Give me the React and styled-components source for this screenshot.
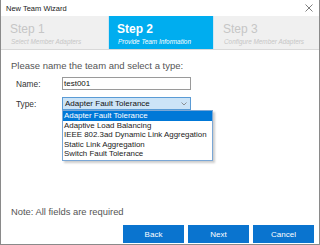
import styled, { createGlobalStyle } from 'styled-components'

const Global = createGlobalStyle`
    html, body {
        margin: 0;
        padding: 0;
        background: #ffffff;
    }
    body {
        font-family: "Liberation Sans", Arial, sans-serif;
    }
`

const steps = [
    { title: 'Step 1', sub: 'Select Member Adapters' },
    { title: 'Step 2', sub: 'Provide Team Information', active: true },
    { title: 'Step 3', sub: 'Configure Member Adapters' },
]

const options = [
    'Adapter Fault Tolerance',
    'Adaptive Load Balancing',
    'IEEE 802.3ad Dynamic Link Aggregation',
    'Static Link Aggregation',
    'Switch Fault Tolerance',
]

const App = () => {
    return (
        <Window>
            <Global />
            <TitleBar>
                <TitleText>New Team Wizard</TitleText>
                <Close>
                    <svg width="8" height="8" viewBox="0 0 8 8">
                        <path d="M0.5 0.5 L7.5 7.5 M7.5 0.5 L0.5 7.5" stroke="#707070" strokeWidth="0.9" />
                    </svg>
                </Close>
            </TitleBar>
            <StepBar>
                {steps.map((s) => (
                    <Step key={s.title} active={s.active}>
                        <StepTitle active={s.active}>{s.title}</StepTitle>
                        <StepSub active={s.active}>{s.sub}</StepSub>
                    </Step>
                ))}
            </StepBar>
            <Content>
                <Heading>Please name the team and select a type:</Heading>
                <Row>
                    <Label>Name:</Label>
                    <Input>test001</Input>
                </Row>
                <Row>
                    <Label>Type:</Label>
                    <SelectWrap>
                        <Select>
                            <span>Adapter Fault Tolerance</span>
                            <svg width="6" height="4" viewBox="0 0 6 4">
                                <path d="M0.5 0.5 L3 3 L5.5 0.5" stroke="#7a7a7a" strokeWidth="0.8" fill="none" />
                            </svg>
                        </Select>
                        <List>
                            {options.map((o, i) => (
                                <Option key={o} selected={i === 0}>{o}</Option>
                            ))}
                        </List>
                    </SelectWrap>
                </Row>
            </Content>
            <Note>Note: All fields are required</Note>
            <Buttons>
                <Button>Back</Button>
                <Button>Next</Button>
                <Button>Cancel</Button>
            </Buttons>
        </Window>
    )
}

const Window = styled.div`
    width: 320px;
    height: 245px;
    box-sizing: border-box;
    border: 1px solid #8a8a8a;
    border-top: none;
    display: flex;
    flex-direction: column;
    background: #fff;
    overflow: hidden;
`

const TitleBar = styled.div`
    height: 16px;
    display: flex;
    align-items: center;
    justify-content: space-between;
    padding: 0 5px 0 5px;
    background: #fff;
`

const TitleText = styled.div`
    font-size: 7.5px;
    color: #1a1a1a;
`

const Close = styled.div`
    display: flex;
    align-items: center;
    margin-right: 1px;
`

const StepBar = styled.div`
    height: 33px;
    display: flex;
    background: #f0f0f0;
    border-bottom: 1px solid #d9d9d9;
`

const Step = styled.div`
    flex: 0 0 106px;
    box-sizing: border-box;
    padding: 7px 0 0 ${(p) => (p.active ? '8px' : '9px')};
    background: ${(p) => (p.active ? '#00adef' : 'transparent')};
    border-left: ${(p) => (p.active ? '1px solid #cfe6f2' : 'none')};
    border-right: ${(p) => (p.active ? '1px solid #cfe6f2' : 'none')};
    margin-left: ${(p) => (p.active ? '1px' : '0')};
`

const StepTitle = styled.div`
    font-size: 12px;
    font-weight: ${(p) => (p.active ? 700 : 400)};
    color: ${(p) => (p.active ? '#ffffff' : '#c6c6c6')};
    line-height: 13px;
`

const StepSub = styled.div`
    font-size: 6.4px;
    font-style: italic;
    color: ${(p) => (p.active ? '#ffffff' : '#c6c6c6')};
    margin-top: 2px;
    padding-left: 1px;
`

const Content = styled.div`
    padding: 10px 0 0 10px;
    display: flex;
    flex-direction: column;
`

const Heading = styled.div`
    font-size: 9.5px;
    color: #555;
    margin-bottom: 6px;
`

const Row = styled.div`
    display: flex;
    align-items: center;
    margin-bottom: 7px;
`

const Label = styled.div`
    width: 46px;
    padding-left: 5px;
    font-size: 8.3px;
    color: #333;
`

const Input = styled.div`
    width: 129px;
    height: 13px;
    box-sizing: border-box;
    border: 1px solid #9a9a9a;
    font-size: 8px;
    color: #111;
    padding-left: 1px;
    line-height: 11px;
`

const SelectWrap = styled.div`
    position: relative;
`

const Select = styled.div`
    width: 129px;
    height: 13px;
    box-sizing: border-box;
    border: 1px solid #5a9bd5;
    background: #cce4f7;
    font-size: 8px;
    color: #111;
    padding: 0 3px 0 2px;
    line-height: 11px;
    display: flex;
    align-items: center;
    justify-content: space-between;
`

const List = styled.div`
    position: absolute;
    left: 0;
    top: 13px;
    width: 151px;
    box-sizing: border-box;
    border: 1px solid #7aa7d6;
    background: #fff;
    box-shadow: 2px 2px 2px rgba(0, 0, 0, 0.2);
    padding-bottom: 1px;
`

const Option = styled.div`
    height: 9.6px;
    line-height: 9.6px;
    font-size: 7.9px;
    padding-left: 1px;
    color: ${(p) => (p.selected ? '#fff' : '#222')};
    background: ${(p) => (p.selected ? '#0078d7' : 'transparent')};
    white-space: nowrap;
`

const Note = styled.div`
    margin-top: auto;
    padding-left: 10px;
    font-size: 9.4px;
    color: #555;
    margin-bottom: 8px;
`

const Buttons = styled.div`
    display: flex;
    justify-content: flex-end;
    gap: 4px;
    padding: 0 5px 1px 0;
`

const Button = styled.div`
    width: 61px;
    height: 18px;
    background: #0a74cf;
    color: #fff;
    font-size: 8px;
    display: flex;
    align-items: center;
    justify-content: center;
`

export default App
